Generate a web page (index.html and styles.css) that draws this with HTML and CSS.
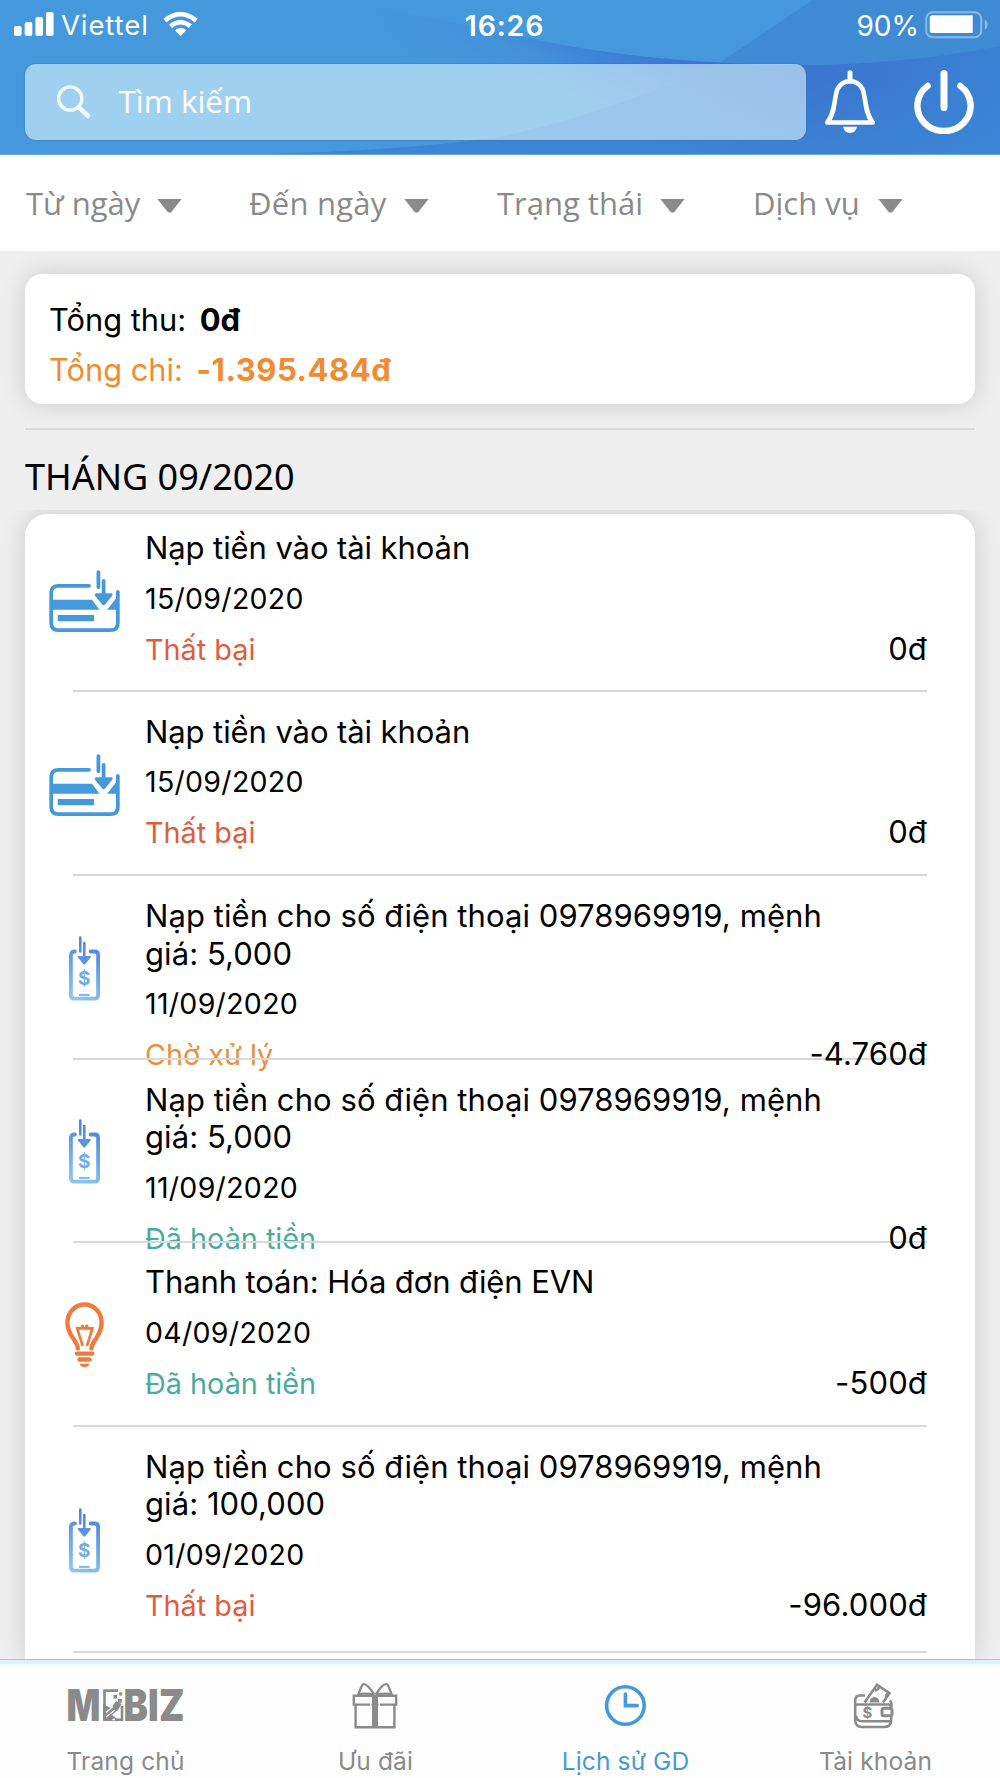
FILE: index.html
```html
<!DOCTYPE html>
<html lang="vi">
<head>
<meta charset="utf-8">
<title>Lịch sử GD</title>
<link rel="stylesheet" href="styles.css">
</head>
<body>
<svg class="defs" width="0" height="0" aria-hidden="true">
  <defs>
    <linearGradient id="phoneGrad" gradientUnits="userSpaceOnUse" x1="27" y1="10" x2="4" y2="62">
      <stop offset="0" stop-color="#4f84e0"/><stop offset="1" stop-color="#8cc6ee"/>
    </linearGradient>
    <symbol id="card" viewBox="0 0 72 64">
      <g fill="none" stroke="#4499dd" stroke-width="3.8" stroke-linecap="round">
        <path d="M40 15.8H9.5Q2.2 15.8 2.2 23V53Q2.2 60.2 9.5 60.2H61.5Q68.8 60.2 68.8 53V22"/>
        <path d="M49.4 2.2V17.2M54.6 11V25"/>
      </g>
      <path fill="#4499dd" d="M2 29.7H43L50.5 39.7H2zM69 26L58 39.7H69zM8.7 45H45V51.3H8.7zM47 23.3H62.5Q64.5 24 63 26L56 34.5Q54.6 36 53.2 34.5L46.2 26Q45 24 47 23.3z"/>
    </symbol>
    <symbol id="phone" viewBox="0 0 31 65">
      <g fill="none" stroke="url(#phoneGrad)" stroke-width="3.8" stroke-linecap="round">
        <path d="M6 15.5H5.5Q1.9 15.5 1.9 19V59Q1.9 62.6 5.5 62.6H25.5Q29.1 62.6 29.1 59V19Q29.1 15.5 25.5 15.5H21.6"/>
        <path stroke-width="2.6" d="M11.3 1.5V15.5M15.3 7V22"/>
        <path stroke-width="2" stroke="#7db6ec" stroke-linecap="butt" d="M10 58.9H20.7"/>
      </g>
      <path fill="#5f92e4" d="M9.2 20H21.4Q22.4 20.6 21.6 21.6L16.4 28Q15.3 29.2 14.2 28L9 21.6Q8.3 20.6 9.2 20z"/>
      <text x="15.3" y="49.4" text-anchor="middle" fill="#72abe9" class="phone-dollar">$</text>
    </symbol>
    <symbol id="bulb" viewBox="0 0 40 66">
      <g fill="none" stroke="#f07a3c" stroke-width="4.4" stroke-linecap="round">
        <path d="M12.8 46.5C12.3 37.5 2.4 34.5 2.4 20.5A17.1 18 0 0 1 36.6 20.5C36.6 34.5 27.2 37.5 26.4 46.5"/>
        <path d="M12 51.6H27.2M14.5 57.5H24.5"/>
        <path stroke-width="2.6" d="M12 26L17.4 43M27.6 26L22.2 43M12 26.4H27"/>
        <path stroke-width="3.4" d="M17.4 24.2v.6M21.8 24.2v.6"/>
      </g>
      <path fill="#f07a3c" d="M14.8 61.7H24.4Q24 65 19.6 65T14.8 61.7z"/>
    </symbol>
  </defs>
</svg>

<div class="app">
  <header class="header">
    <svg class="header-art" viewBox="0 0 1000 155" preserveAspectRatio="none" aria-hidden="true">
      <defs>
        <linearGradient id="waveA" gradientUnits="userSpaceOnUse" x1="640" y1="45" x2="600" y2="145">
          <stop offset="0" stop-color="#3c78d3"/><stop offset=".45" stop-color="#428cd9"/><stop offset="1" stop-color="#4598db"/>
        </linearGradient>
        <linearGradient id="waveFade" gradientUnits="userSpaceOnUse" x1="360" y1="0" x2="600" y2="0">
          <stop offset="0" stop-color="#4598db"/><stop offset="1" stop-color="#4598db" stop-opacity="0"/>
        </linearGradient>
        <linearGradient id="waveB" gradientUnits="userSpaceOnUse" x1="500" y1="0" x2="1000" y2="0">
          <stop offset="0" stop-color="#3c85d5"/><stop offset=".35" stop-color="#3b80d3"/><stop offset=".62" stop-color="#3a75d0"/><stop offset="1" stop-color="#3b82d3"/>
        </linearGradient>
        <linearGradient id="waveC" x1="0" y1="0" x2="0" y2="1">
          <stop offset=".3" stop-color="#3c85d5" stop-opacity="0"/><stop offset="1" stop-color="#3c85d5" stop-opacity=".8"/>
        </linearGradient>
      </defs>
      <rect width="1000" height="155" fill="#4598db"/>
      <path fill="url(#waveA)" d="M360 0H813L722 62V155H270V0z"/>
      <path fill="url(#waveFade)" d="M260 0H640V155H260z"/>
      <path fill="#4598db" d="M340 0C440 20 500 32 540 41C600 53 660 60 722 63L813 0z"/>
      <path fill="#3e8bd4" d="M813 0L720 63Q870 72 1000 46V0z"/>
      <g id="swell">
        <path fill="url(#waveB)" d="M720 63Q870 72 1000 46V155H270Q400 152 500 138C590 118 660 90 720 63z"/>
        <path fill="url(#waveC)" d="M720 63Q870 72 1000 46V155H270Q400 152 500 138C590 118 660 90 720 63z"/>
      </g>
    </svg>
    <div class="statusbar">
      <div class="carrier">
        <svg width="40" height="25" viewBox="0 0 40 25" fill="#fff"><rect x="0" y="14" width="7.6" height="10" rx="2"/><rect x="10.7" y="10" width="7.6" height="14" rx="2"/><rect x="21.4" y="5" width="7.6" height="19" rx="2"/><rect x="32" y="0" width="7.6" height="24" rx="2"/></svg>
        <span class="operator">Viettel</span>
        <svg width="35" height="25" viewBox="0 0 35 25" fill="none" stroke="#fff" stroke-width="4.6"><path d="M1.8 8.6Q17.5 -4.2 33.2 8.6"/><path d="M7.5 14.3Q17.5 6.2 27.5 14.3"/><path fill="#fff" stroke="none" d="M11.8 18.2Q17.5 13.8 23.2 18.2L17.5 24.2z"/></svg>
      </div>
      <span class="clock">16:26</span>
      <div class="power-state">
        <span class="percent">90%</span>
        <svg width="64" height="28" viewBox="0 0 64 28"><rect x="1.2" y="1.2" width="55" height="25" rx="6.5" fill="none" stroke="#fff" stroke-opacity=".4" stroke-width="2"/><path d="M7 4.2H47.7V22H7Q4.7 22 4.7 19.5V6.7Q4.7 4.2 7 4.2z" fill="#fff"/><path d="M59.8 8.5Q62.6 10 62.6 13.5T59.8 18.5z" fill="#fff" fill-opacity=".45"/></svg>
      </div>
    </div>
    <div class="searchrow">
      <div class="search">
        <svg width="36" height="36" viewBox="0 0 36 36" fill="none" stroke="#fff" stroke-opacity=".85" stroke-linecap="round"><circle cx="14.2" cy="14.5" r="11.6" stroke-width="3.4"/><path d="M23 23.5L32 32" stroke-width="4.6"/></svg>
        <span>Tìm kiếm</span>
      </div>
      <svg class="bell" width="52" height="64" viewBox="0 0 52 64" fill="none" stroke="#fff" stroke-width="5" stroke-linecap="round" stroke-linejoin="round"><path d="M26 2.8V11"/><path d="M3.2 52.5H48.8C40 42 42.5 29 38.5 19Q34.5 11.2 26 11.2T13.5 19C9.5 29 12 42 3.2 52.5z" stroke-width="4.6"/><path d="M19 56.8H33Q31.5 63 26 63T19 56.8z" fill="#fff" stroke="none"/></svg>
      <svg class="power" width="60" height="64" viewBox="0 0 60 64" fill="none" stroke="#fff" stroke-width="7" stroke-linecap="round"><path d="M30 3.6V37.5"/><path d="M13.6 16A26.6 25.2 0 1 0 46.4 16" stroke-width="6.4"/></svg>
    </div>
  </header>

  <nav class="filters">
    <span class="filter f1">Từ ngày<i></i></span>
    <span class="filter f2">Đến ngày<i></i></span>
    <span class="filter f3">Trạng thái<i></i></span>
    <span class="filter f4">Dịch vụ<i></i></span>
  </nav>

  <main class="content">
    <section class="summary">
      <p>Tổng thu: <b>0đ</b></p>
      <p class="out">Tổng chi: <b>-1.395.484đ</b></p>
    </section>
    <hr class="rule">
    <h2 class="month">THÁNG 09/2020</h2>
    <section class="list">
      <article class="row first">
        <div class="icon"><svg width="72" height="64"><use href="#card"/></svg></div>
        <div class="info"><p class="title">Nạp tiền vào tài khoản</p><p class="date">15/09/2020</p><div class="foot"><span class="status fail">Thất bại</span><span class="amount">0đ</span></div></div>
      </article>
      <article class="row">
        <div class="icon wide"><svg width="72" height="64"><use href="#card"/></svg></div>
        <div class="info"><p class="title">Nạp tiền vào tài khoản</p><p class="date">15/09/2020</p><div class="foot"><span class="status fail">Thất bại</span><span class="amount">0đ</span></div></div>
      </article>
      <article class="row">
        <div class="icon"><svg width="31" height="65"><use href="#phone"/></svg></div>
        <div class="info two"><p class="title long">Nạp tiền cho số điện thoại 0978969919, mệnh giá: 5,000</p><p class="date">11/09/2020</p><div class="foot"><span class="status wait">Chờ xử lý</span><span class="amount">-4.760đ</span></div></div>
      </article>
      <article class="row">
        <div class="icon"><svg width="31" height="65"><use href="#phone"/></svg></div>
        <div class="info two"><p class="title long">Nạp tiền cho số điện thoại 0978969919, mệnh giá: 5,000</p><p class="date">11/09/2020</p><div class="foot"><span class="status done">Đã hoàn tiền</span><span class="amount">0đ</span></div></div>
      </article>
      <article class="row">
        <div class="icon"><svg width="40" height="66"><use href="#bulb"/></svg></div>
        <div class="info"><p class="title">Thanh toán: Hóa đơn điện EVN</p><p class="date">04/09/2020</p><div class="foot"><span class="status done">Đã hoàn tiền</span><span class="amount">-500đ</span></div></div>
      </article>
      <article class="row tall">
        <div class="icon"><svg width="31" height="65"><use href="#phone"/></svg></div>
        <div class="info two"><p class="title long">Nạp tiền cho số điện thoại 0978969919, mệnh giá: 100,000</p><p class="date">01/09/2020</p><div class="foot"><span class="status fail">Thất bại</span><span class="amount">-96.000đ</span></div></div>
      </article>
    </section>
  </main>

  <nav class="tabbar">
    <div class="tab">
      <svg width="128" height="56" viewBox="-4 -4 128 56" fill="#8a8a8a">
        <g class="logo-text"><text x="1.6" y="39" textLength="34" lengthAdjust="spacingAndGlyphs">M</text><text x="58.5" y="39" textLength="61" lengthAdjust="spacingAndGlyphs">BIZ</text></g>
        <path fill="none" stroke="#8a8a8a" stroke-width="2.6" d="M53 8.6H39.5V37.8H57V24"/>
        <path d="M38 22L46 26L51 19L56.5 22L53 28L47 33L55 39H38z"/>
        <path d="M48.5 13h3.6v3.6h-3.6zM53 17h3.8v3.8H53zM54.2 10.5h3v3h-3zM50.5 7.6h2.4v2.4h-2.4z"/>
        <path stroke="#fdfdfd" stroke-width="1.3" d="M41 30.5L48 24.5M41 35L50 28M47.5 37.5h2.5"/>
      </svg>
      <span>Trang chủ</span>
    </div>
    <div class="tab">
      <svg width="46" height="56" viewBox="0 -4 46 56" fill="none" stroke="#8a8a8a" stroke-width="2.4"><path d="M1.8 13.8H44.2V22.6H1.8zM3.6 22.6V45.2H42.4V22.6"/><path fill="#8a8a8a" stroke="none" d="M20 13H26V45H20z"/><path stroke="#fdfdfd" stroke-width="1.4" d="M18.8 15V44M27.2 15V44"/><path stroke-linejoin="round" d="M22.2 12.5Q15 1 11.2 2.2Q10 2.5 6.2 12.6Q12 10.5 22.2 12.8M23.8 12.5Q31 1 34.8 2.2Q36 2.5 39.8 12.6Q34 10.5 23.8 12.8"/></svg>
      <span>Ưu đãi</span>
    </div>
    <div class="tab active">
      <svg width="46" height="56" viewBox="0 -4 46 56" fill="none" stroke="#4499dd" stroke-width="3.6"><circle cx="23.4" cy="23.5" r="18.8"/><path d="M23.4 12V23.6H35.2" stroke-linecap="round"/></svg>
      <span>Lịch sử GD</span>
    </div>
    <div class="tab">
      <svg width="46" height="56" viewBox="0 -4 46 56" fill="none" stroke="#8a8a8a" stroke-width="2.5">
        <path d="M13 13.4H8Q3.2 13.4 3.2 18.5V37.5Q3.2 45 10 45H32Q38.4 45 39.2 39V33M3.2 22.4H36.5Q39 22.4 39 25V28M37.8 18.5Q39.8 20 39.6 25M4 34Q5 39.2 10 39.2H38"/>
        <path d="M12.5 20.5L25 2.8L37.5 11.2L31 20.5M27 5Q26.5 8 23 8.5M36 11.5Q33 13.5 35 15.5"/>
        <rect x="30" y="26.2" width="10" height="7.6" rx="2" stroke-width="3"/>
        <path fill="#8a8a8a" stroke="none" d="M17.5 20.5A5 5.5 0 0 1 27.5 20.5z"/>
        <text x="15.5" y="36.2" text-anchor="middle" fill="#8a8a8a" stroke="none" class="wallet-dollar">$</text>
      </svg>
      <span>Tài khoản</span>
    </div>
  </nav>
</div>
</body>
</html>
```
FILE: styles.css
```css
* { box-sizing: border-box; }

body {
  margin: 0;
  background: #eee;
  font-family: Inter, "Liberation Sans", sans-serif;
  color: #000;
}

p, h2, hr { margin: 0; }
svg { display: block; flex: none; }
.defs { position: absolute; }

.app {
  width: 1000px;
  height: 1778px;
  overflow: hidden;
  display: flex;
  flex-direction: column;
}

/* Header */
.header {
  position: relative;
  flex: none;
  height: 155px;
  border-bottom: 1px solid #67a6e2;
  color: #fff;
}
.header-art {
  position: absolute;
  inset: 0;
  width: 100%;
  height: 100%;
}
.statusbar {
  position: relative;
  height: 50px;
  padding: 0 11px 0 14px;
  display: grid;
  grid-template-columns: 1fr auto 1fr;
  align-items: center;
}
.carrier, .power-state { display: flex; align-items: center; }
.carrier svg { margin-bottom: 2px; }
.operator { margin: 0 14px 0 7px; font-size: 27.5px; letter-spacing: .9px; }
.clock { font-size: 28.5px; font-weight: 600; letter-spacing: .8px; padding-left: 6px; }
.power-state { justify-content: flex-end; }
.percent { font-size: 28px; letter-spacing: 0; margin: 1px 6px 0 0; }
.power-state svg { margin-bottom: 1px; }

.searchrow {
  position: relative;
  display: flex;
  align-items: center;
  padding: 14px 25px 0;
}
.search {
  width: 781px;
  height: 76px;
  border-radius: 11px;
  background: rgba(235, 255, 255, .55);
  box-shadow: 0 0 1px 1px rgba(60, 110, 160, .3);
  display: flex;
  align-items: center;
  padding-left: 31px;
  font: 31.4px/44px "Open Sans", "Noto Sans", sans-serif;
}
.search span { margin: 0 0 2px 26.5px; }
.bell { margin-left: 18px; }
.power { margin-left: 38px; }

/* Filters */
.filters {
  flex: none;
  height: 96px;
  background: #fff;
  padding: 0 0 0 26px;
  display: flex;
  align-items: center;
  font: 31px/44px "Open Sans", "Noto Sans", sans-serif;
  color: #8a8a8a;
}
.filter { display: flex; align-items: center; flex: none; }
.filter i {
  width: 25px;
  height: 15px;
  margin: 6px 0 0 auto;
  background: #8a8a8a;
  clip-path: polygon(0 0, 100% 0, 56% 93%, 44% 93%);
}
.f1 { width: 156px; }
.f2 { width: 180px; margin-left: 67px; letter-spacing: .25px; }
.f3 { width: 188px; margin-left: 68px; }
.f4 { width: 150px; margin-left: 68px; }

/* Content */
.content {
  flex: 1;
  min-height: 0;
  overflow: hidden;
  padding: 23px 25px 0;
  display: flex;
  flex-direction: column;
}
.summary, .list {
  background: #fff;
  box-shadow: 0 0 24px rgba(0, 0, 0, .15);
}
.summary {
  flex: none;
  height: 130px;
  border-radius: 17px;
  padding: 26.5px 24px 0;
  font-size: 30.8px;
}
.summary p { height: 50.5px; line-height: 37px; }
.summary b { font-size: 31px; margin-left: 5px; }
.summary .out { color: #f08b32; }
.out b { letter-spacing: .55px; }
.rule {
  flex: none;
  margin-top: 24px;
  border: 0;
  height: 2px;
  background: #dadada;
}
.month {
  flex: none;
  height: 84px;
  padding-top: 22px;
  font: 400 36px/50px "Noto Sans", "Open Sans", sans-serif;
}

/* Transactions */
.list {
  flex: 1 0 auto;
  border-radius: 22px 22px 0 0;
  clip-path: inset(-4px -25px 0 -25px);
}
.row {
  position: relative;
  height: 183.6px;
  display: flex;
  padding-right: 48px;
}
.row::after {
  content: "";
  position: absolute;
  left: 48px;
  right: 48px;
  bottom: 0;
  height: 2px;
  background: #d8d8d8;
  z-index: 1;
}
.row.first { height: 178.4px; }
.row.tall { height: 226.4px; }
.icon {
  width: 120px;
  padding: 1px 1px 0 0;
  flex: none;
  display: flex;
  align-items: center;
  justify-content: center;
}
.icon.wide { padding-top: 4px; }
.first .icon { margin-top: -4px; }
.info { flex: 1; padding-top: 20.2px; }
.info.two { padding-top: 21.3px; }
.first .info { padding-top: 15px; }
.title {
  max-width: 700px;
  font-size: 31px;
  line-height: 37.3px;
  letter-spacing: -.09px;
}
.title.long { letter-spacing: .07px; }
.date { margin-top: 14.4px; font-size: 28.5px; line-height: 36px; letter-spacing: .3px; }
.foot {
  margin-top: 14px;
  display: flex;
  justify-content: space-between;
  align-items: baseline;
  line-height: 36px;
}
.status { font-size: 28.8px; }
.amount { position: relative; z-index: 2; font-size: 31px; letter-spacing: .15px; }
.fail { color: #e05c3c; }
.wait { color: #e8903f; }
.done { color: #48ab9e; }

/* Tab bar */
.tabbar {
  position: relative;
  z-index: 3;
  flex: none;
  height: 119px;
  border-top: 1px solid #b5bec6;
  background: linear-gradient(#dff0fd 0 4px, #fdfdfd 5px);
  display: grid;
  grid-template-columns: repeat(4, 1fr);
  padding-top: 18px;
}
.tab {
  display: flex;
  flex-direction: column;
  align-items: center;
  gap: 9px;
  font-size: 24.5px;
  line-height: 36px;
  letter-spacing: .15px;
  color: #8a8a8a;
}
.tab span { padding-left: 1px; }
.active { color: #4499dd; }
.logo-text { font: 900 44px Inter, sans-serif; }
.phone-dollar { font: 700 19px Inter, sans-serif; }
.wallet-dollar { font: 700 15px Inter, sans-serif; }
```
